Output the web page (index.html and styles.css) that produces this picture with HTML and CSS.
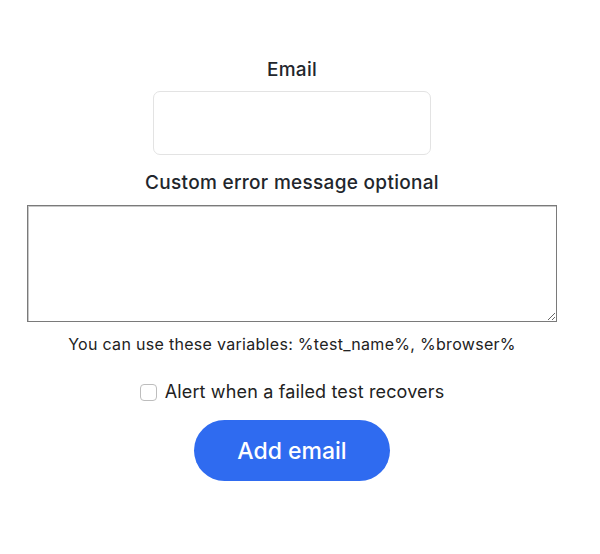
FILE: index.html
```html
<!DOCTYPE html>
<html>
<head>
<meta charset="utf-8">
<link rel="stylesheet" href="styles.css">
</head>
<body>
<form class="form">
  <label class="label" for="email">Email</label>
  <input class="email-input" id="email" type="email">
  <label class="label label-custom" for="msg">Custom error message optional</label>
  <textarea class="message" id="msg"></textarea>
  <p class="hint">You can use these variables: %test_name%, %browser%</p>
  <label class="check-row">
    <input class="check" type="checkbox">
    <span>Alert when a failed test recovers</span>
  </label>
  <button class="btn" type="button">Add email</button>
</form>
</body>
</html>
```
FILE: styles.css
```css
html, body {
  margin: 0;
  padding: 0;
  background: #fff;
}
body {
  font-family: Inter, "Noto Sans", sans-serif;
  color: #1f2329;
}
.form {
  width: 530px;
  margin: 0 0 0 27px;
  padding-top: 58px;
  display: flex;
  flex-direction: column;
  align-items: center;
}
.label {
  font-size: 19px;
  font-weight: 500;
  line-height: 24px;
  letter-spacing: 0.3px;
  color: #22262c;
}
.email-input {
  box-sizing: border-box;
  width: 278px;
  height: 64px;
  margin-top: 9px;
  border: 1px solid #e3e3e3;
  border-radius: 7px;
  background: #fff;
  outline: none;
}
.label-custom {
  margin-top: 16px;
}
.message {
  box-sizing: border-box;
  width: 530px;
  height: 117px;
  margin-top: 10px;
  border: 1px solid #7a7a7a;
  box-shadow: inset 1px 1px 0 #c8c8c8;
  resize: vertical;
  font-family: inherit;
}
.hint {
  margin: 12px 0 0;
  font-size: 16px;
  line-height: 20px;
  letter-spacing: 0.3px;
  color: #222;
}
.check-row {
  display: flex;
  align-items: center;
  gap: 8px;
  margin-top: 27px;
  font-size: 18px;
  line-height: 22px;
  letter-spacing: 0.15px;
  color: #222;
}
.check {
  appearance: none;
  box-sizing: border-box;
  width: 17px;
  height: 17px;
  margin: 0;
  border: 1px solid #bdbdbd;
  border-radius: 4px;
  background: #fff;
}
.btn {
  margin-top: 17px;
  width: 196px;
  height: 61px;
  border: none;
  border-radius: 31px;
  background: #2f6bf0;
  color: #fff;
  font-family: inherit;
  font-size: 23px;
  font-weight: 500;
}
```
